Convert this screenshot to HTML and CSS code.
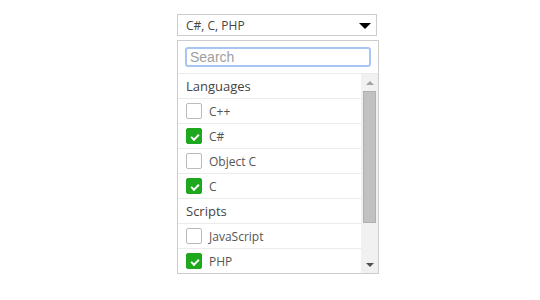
FILE: index.html
```html
<!DOCTYPE html>
<html lang="en">
<head>
    <meta charset="UTF-8">
    <title>Multiselect</title>
    <link rel="stylesheet" href="styles.css">
</head>
<body>
    <div class="multiselect">
        <div class="select-box">
            <span class="select-value">C#, C, PHP</span>
            <span class="select-arrow"></span>
        </div>

        <div class="dropdown">
            <div class="search-area">
                <input type="text" class="search-input" placeholder="Search">
            </div>

            <div class="dropdown-body">
                <ul class="option-list">
                    <li class="group-label">Languages</li>
                    <li class="option"><span class="check"></span>C++</li>
                    <li class="option"><span class="check checked"></span>C#</li>
                    <li class="option"><span class="check"></span>Object C</li>
                    <li class="option"><span class="check checked"></span>C</li>
                    <li class="group-label">Scripts</li>
                    <li class="option"><span class="check"></span>JavaScript</li>
                    <li class="option"><span class="check checked"></span>PHP</li>
                </ul>

                <div class="scrollbar">
                    <span class="scroll-btn up"></span>
                    <div class="scroll-track">
                        <div class="scroll-thumb"></div>
                    </div>
                    <span class="scroll-btn down"></span>
                </div>
            </div>
        </div>
    </div>
</body>
</html>
```

FILE: styles.css
```css
:root {
    --border: #cccccc;
    --line: #ebebeb;
    --text: #555555;
    --heading: #444444;
    --green: #1ea81e;
}

* {
    box-sizing: border-box;
    margin: 0;
    padding: 0;
}

body {
    background: #ffffff;
    font-family: 'Open Sans', sans-serif;
    color: var(--text);
}

.multiselect {
    width: 202px;
    margin: 14px 0 0 177px;
}

.select-box {
    width: 200px;
    height: 22px;
    border: 1px solid var(--border);
    display: flex;
    align-items: center;
    justify-content: space-between;
    padding: 0 5px 0 8px;
    font-size: 12px;
    color: #444;
}

.select-arrow {
    width: 0;
    height: 0;
    border-left: 6px solid transparent;
    border-right: 6px solid transparent;
    border-top: 6px solid #000;
    margin-top: 1px;
}

.dropdown {
    margin-top: 4px;
    height: 234px;
    border: 1px solid var(--border);
    display: flex;
    flex-direction: column;
}

.search-area {
    padding: 6px 7px 6px 7px;
    border-bottom: 1px solid var(--line);
}

.search-input {
    display: block;
    width: 186px;
    height: 20px;
    border: 2px solid #a8c6f2;
    border-radius: 3px;
    padding: 0 3px;
    font-family: 'Liberation Sans', Arial, sans-serif;
    font-size: 14px;
    outline: none;
}

.search-input::placeholder {
    color: #a0a0a0;
}

.dropdown-body {
    flex: 1;
    display: flex;
    overflow: hidden;
}

.option-list {
    flex: 1;
    list-style: none;
    overflow: hidden;
}

.option-list li {
    height: 25px;
    border-bottom: 1px solid var(--line);
    display: flex;
    align-items: center;
    padding-left: 8px;
}

.group-label {
    font-size: 13px;
    color: var(--heading);
}

.option {
    font-size: 12px;
    color: var(--text);
    gap: 7px;
}

.check {
    width: 16px;
    height: 16px;
    border: 1px solid #bbbbbb;
    border-radius: 2px;
    background: #fff;
    position: relative;
}

.check.checked {
    background: var(--green);
    border-color: var(--green);
}

.check.checked::after {
    content: "";
    position: absolute;
    left: 4px;
    top: 5px;
    width: 6px;
    height: 3px;
    border-left: 2px solid #fff;
    border-bottom: 2px solid #fff;
    transform: rotate(-45deg);
}

.scrollbar {
    width: 17px;
    background: #f1f1f1;
    display: flex;
    flex-direction: column;
    align-items: center;
}

.scroll-btn {
    height: 17px;
    width: 17px;
    display: flex;
    align-items: center;
    justify-content: center;
    flex-shrink: 0;
}

.scroll-btn::before {
    content: "";
    width: 0;
    height: 0;
    border-left: 4px solid transparent;
    border-right: 4px solid transparent;
}

.scroll-btn.up::before {
    border-bottom: 4px solid #a3a3a3;
}

.scroll-btn.down::before {
    border-top: 4px solid #505050;
}

.scroll-track {
    flex: 1;
    width: 100%;
    padding: 0 2px;
}

.scroll-thumb {
    height: 132px;
    background: #c1c1c1;
    border: 1px solid #b0b0b0;
}
```
